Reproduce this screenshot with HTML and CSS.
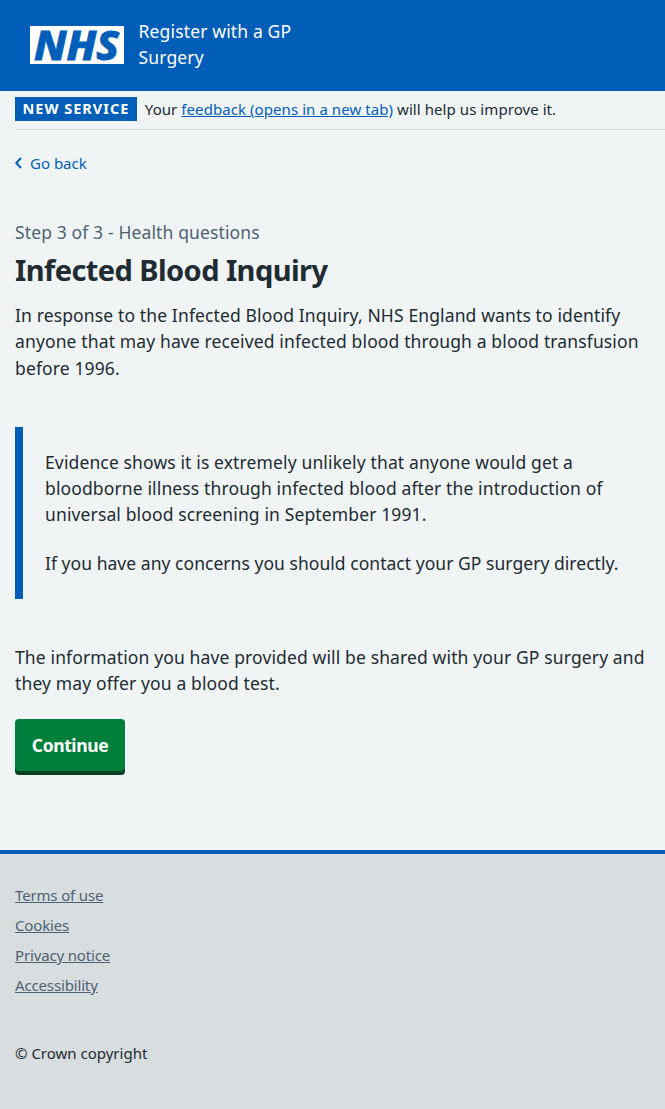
FILE: index.html
```
<!DOCTYPE html>
<html lang="en">

<head>
    <meta charset="UTF-8">
    <meta name="viewport" content="width=device-width, initial-scale=1.0">
    <title>Infected Blood Inquiry - Register with a GP Surgery</title>
    <link rel="stylesheet" href="styles.css">
</head>

<body>
    <header class="header">
        <svg class="logo" viewBox="0 0 94 38" role="img" aria-label="NHS">
            <rect width="94" height="38" fill="#fff" />
            <text class="logo-text" x="4" y="33.8" textLength="85" lengthAdjust="spacingAndGlyphs">NHS</text>
        </svg>
        <a href="#" class="service-name">Register with a GP Surgery</a>
    </header>

    <div class="banner">
        <strong class="tag">New service</strong>
        <span class="banner-text">Your <a href="#">feedback (opens in a new tab)</a> will help us improve it.</span>
    </div>

    <a href="#" class="back-link">
        <svg width="8" height="12" viewBox="0 0 8 12">
            <path d="M7 1 L2.3 6 L7 11" />
        </svg>
        <span>Go back</span>
    </a>

    <main>
        <span class="caption">Step 3 of 3 - Health questions</span>
        <h1>Infected Blood Inquiry</h1>
        <p>In response to the Infected Blood Inquiry, NHS England wants to identify<br>
            anyone that may have received infected blood through a blood transfusion<br>
            before 1996.</p>

        <div class="inset">
            <p>Evidence shows it is extremely unlikely that anyone would get a<br>
                bloodborne illness through infected blood after the introduction of<br>
                universal blood screening in September 1991.</p>
            <p>If you have any concerns you should contact your GP surgery directly.</p>
        </div>

        <p>The information you have provided will be shared with your GP surgery and<br>
            they may offer you a blood test.</p>
        <button type="button" class="button">Continue</button>
    </main>

    <footer>
        <ul>
            <li><a href="#">Terms of use</a></li>
            <li><a href="#">Cookies</a></li>
            <li><a href="#">Privacy notice</a></li>
            <li><a href="#">Accessibility</a></li>
        </ul>
        <p class="copyright">© Crown copyright</p>
    </footer>
</body>

</html>
```
FILE: styles.css
```
* {
    box-sizing: border-box;
}

body {
    display: flex;
    flex-direction: column;
    min-height: 1109px;
    margin: 0;
    background-color: #f0f4f5;
    color: #212b32;
    font-family: "Noto Sans", "Open Sans", sans-serif;
    font-size: 17.5px;
    line-height: 26.2px;
    white-space: nowrap;
}

p {
    margin: 0;
}

a {
    color: #005eb8;
}

.header {
    display: flex;
    height: 90.5px;
    padding: 18px 29.5px 0;
    background-color: #005eb8;
}

.logo {
    width: 94px;
    height: 38px;
    margin-top: 8px;
    overflow: visible;
}

.logo-text {
    fill: #005eb8;
    stroke: #005eb8;
    stroke-width: 0.9;
    font-size: 41.5px;
    font-weight: 800;
    font-style: italic;
}

.service-name {
    width: 180px;
    margin-left: 15px;
    color: #fff;
    letter-spacing: 0.15px;
    white-space: normal;
    text-decoration: none;
}

.banner {
    display: flex;
    align-items: center;
    height: 39.5px;
    padding-bottom: 1px;
    margin-left: 15px;
    border-bottom: 1px solid #d3d8da;
    font-size: 15px;
    line-height: 25px;
    letter-spacing: 0.07px;
}

.tag {
    height: 24px;
    padding: 0 7.5px;
    background-color: #005eb8;
    color: #fff;
    font-size: 14.5px;
    line-height: 23px;
    letter-spacing: 1px;
    text-transform: uppercase;
}

.banner-text {
    margin-left: 8px;
}

/* back link */
.back-link {
    display: flex;
    align-items: center;
    align-self: flex-start;
    height: 24px;
    margin: 21px 0 0 14px;
    font-size: 15px;
    text-decoration: none;
}

.back-link span {
    margin-left: 8px;
}

.back-link path {
    fill: none;
    stroke: #005eb8;
    stroke-width: 2;
}

main {
    flex: 1;
    padding: 44px 15px 0;
    letter-spacing: 0.13px;
}

.caption {
    display: block;
    color: #4c6272;
}

h1 {
    margin: 6px 0 13px;
    font-size: 29px;
    line-height: 38px;
    letter-spacing: -0.57px;
}

.inset {
    margin: 46px 0 45px;
    padding: 22px 22px 22.5px;
    border-left: 8px solid #005eb8;
}

.inset p + p {
    margin-top: 22.5px;
    letter-spacing: 0.04px;
}

.button {
    display: block;
    width: 110px;
    height: 52px;
    margin-top: 23px;
    padding: 0;
    border: none;
    border-radius: 4px;
    background-color: #007f3b;
    box-shadow: 0 4px 0 #00401e;
    color: #fff;
    font-family: inherit;
    font-size: 17.5px;
    font-weight: 700;
    letter-spacing: -0.4px;
    cursor: pointer;
}

footer {
    height: 259px;
    padding: 26px 15px 0;
    border-top: 4px solid #005eb8;
    background-color: #d8dde0;
    font-size: 15px;
}

footer ul {
    margin: 0;
    padding: 0;
    list-style: none;
    letter-spacing: -0.15px;
}

footer li {
    height: 30px;
    line-height: 30px;
}

footer li a {
    color: #4c6272;
}

.copyright {
    margin-top: 40px;
}
```
